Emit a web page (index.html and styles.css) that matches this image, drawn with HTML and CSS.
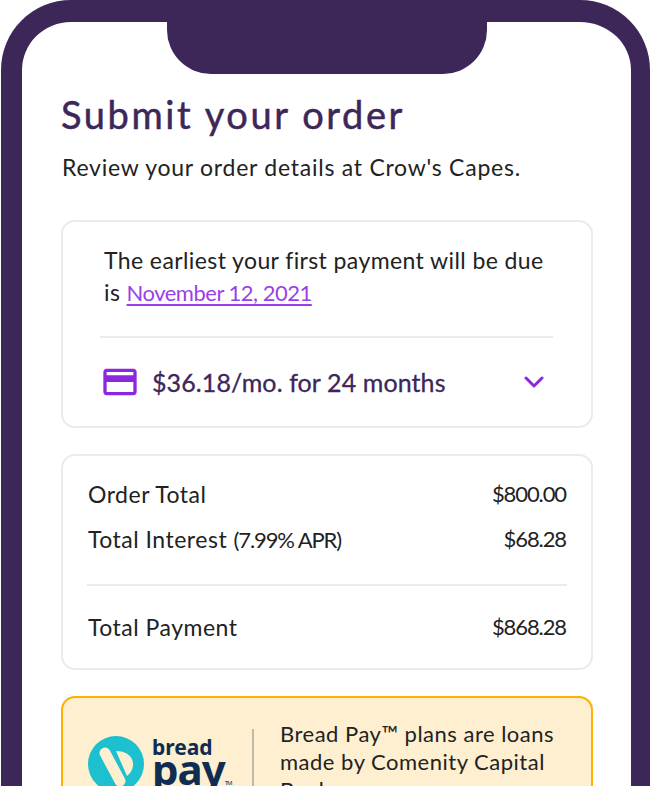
FILE: index.html
```html
<!DOCTYPE html>
<html lang="en">
<head>
    <meta charset="UTF-8">
    <meta name="viewport" content="width=device-width, initial-scale=1.0">
    <title>Submit your order</title>
    <link rel="stylesheet" href="styles.css">
</head>
<body>
    <div class="phone">
        <div class="notch"></div>
        <div class="screen">
            <h1 class="title">Submit your order</h1>
            <p class="subtitle">Review your order details at Crow's Capes.</p>

            <div class="card plan-card">
                <p class="due">The earliest your first payment will be due<br>is <a href="#" class="due-date">November 12, 2021</a></p>
                <hr class="plan-line">
                <div class="plan-row">
                    <svg class="card-icon" viewBox="0 0 24 24"><path d="M20 4H4c-1.11 0-1.99.89-1.99 2L2 18c0 1.11.89 2 2 2h16c1.11 0 2-.89 2-2V6c0-1.11-.89-2-2-2zm0 14H4v-6h16v6zm0-10H4V6h16v2z"/></svg>
                    <span class="plan-text">$36.18/mo. for 24 months</span>
                    <svg class="chevron" viewBox="0 0 20 12"><path d="M2 2l8 8 8-8"/></svg>
                </div>
            </div>

            <div class="card totals-card">
                <div class="total-row"><span>Order Total</span><span class="amount">$800.00</span></div>
                <div class="total-row"><span>Total Interest <span class="amount">(7.99% APR)</span></span><span class="amount">$68.28</span></div>
                <hr class="total-line">
                <div class="total-row"><span>Total Payment</span><span class="amount">$868.28</span></div>
            </div>

            <div class="card notice-card">
                <div class="logo">
                    <svg class="logo-mark" viewBox="0 0 56 56">
                        <circle cx="28" cy="28" r="28" fill="#1dc0cf"/>
                        <path d="M17 17l15 28" stroke="#fdefd0" stroke-width="11" stroke-linecap="round"/>
                        <path d="M28 15c9 0 16 4 17 12 .5 5-2 10-6 13z" fill="#fdefd0"/>
                    </svg>
                    <div class="logo-text">
                        <span class="logo-bread">bread</span>
                        <span class="logo-pay">pay<sup class="logo-tm">TM</sup></span>
                    </div>
                </div>
                <div class="notice-line"></div>
                <p class="notice-text">Bread Pay™ plans are loans made by Comenity Capital Bank.</p>
            </div>
        </div>
    </div>
</body>
</html>
```

FILE: styles.css
```css
html, body {
    margin: 0;
    height: 786px;
    overflow: hidden;
    background: #fff;
}
body {
    font-family: Lato, sans-serif;
    color: #222;
}
.phone {
    box-sizing: border-box;
    width: 649px;
    height: 1000px;
    margin-left: 1px;
    border: solid #3d2759;
    border-width: 22px 19px 22px 21px;
    border-radius: 70px;
    background: #fff;
}
.notch {
    width: 320px;
    height: 52px;
    margin: 0 auto;
    background: #3d2759;
    border-radius: 0 0 44px 44px;
}
.screen {
    padding: 16px 38px 0 39px;
}
.title {
    margin: 0;
    font-size: 38px;
    line-height: 48px;
    font-weight: 400;
    letter-spacing: 2.6px;
    -webkit-text-stroke: 0.5px #3d2759;
    color: #3d2759;
}
.subtitle {
    margin: 13px 0 37px 1px;
    font-size: 23px;
    line-height: 32px;
    letter-spacing: 0.75px;
}
.card {
    box-sizing: border-box;
    border: 2px solid #ebebeb;
    border-radius: 14px;
    margin-bottom: 26px;
}
.plan-card {
    height: 208px;
    padding: 22px 38px 0;
}
.due {
    margin: 0 0 0 3px;
    font-size: 23px;
    line-height: 32px;
    letter-spacing: 0.4px;
}
.due-date {
    color: #9b3fe8;
    font-size: 22px;
    letter-spacing: -0.5px;
    text-underline-offset: 3px;
}
.plan-line, .total-line {
    border: 0;
    height: 2px;
    background: #ebebeb;
}
.plan-line {
    margin: 27px 0 0 -1px;
}
.plan-row {
    display: flex;
    align-items: center;
    margin-top: 24px;
    margin-left: -1px;
}
.card-icon {
    width: 40px;
    height: 40px;
    fill: #8c27e0;
}
.plan-text {
    flex: 1;
    margin-left: 12px;
    font-size: 25px;
    letter-spacing: 0.1px;
    -webkit-text-stroke: 0.3px #3d2759;
    color: #3d2759;
}
.chevron {
    width: 20px;
    height: 12px;
    margin-right: 9px;
    fill: none;
    stroke: #8c27e0;
    stroke-width: 3;
    stroke-linecap: round;
    stroke-linejoin: round;
}
.totals-card {
    height: 216px;
    padding: 20px 25px 0;
}
.total-row {
    display: flex;
    justify-content: space-between;
    font-size: 23px;
    line-height: 36px;
    letter-spacing: 0.5px;
    margin-bottom: 9px;
}
.amount {
    font-size: 22px;
    letter-spacing: -1.1px;
}
.total-line {
    margin: 26px -1px 23px;
}
.notice-card {
    display: flex;
    align-items: flex-start;
    background: #fdefd0;
    border-color: #ffb000;
    padding: 31px 25px 0;
    height: 200px;
}
.logo {
    display: flex;
    align-items: flex-start;
    flex: none;
    width: 164px;
    margin-top: 7px;
}
.logo-mark {
    width: 56px;
    height: 56px;
    flex: none;
}
.logo-text {
    display: flex;
    flex-direction: column;
    margin-left: 8px;
    color: #0f2d52;
    font-family: "Noto Sans", sans-serif;
    font-weight: 700;
}
.logo-bread {
    font-size: 21px;
    line-height: 22px;
}
.logo-pay {
    font-size: 42px;
    line-height: 22px;
    letter-spacing: -1px;
}
.logo-tm {
    font-size: 6px;
    font-weight: 400;
    vertical-align: baseline;
}
.notice-line {
    flex: none;
    width: 2px;
    height: 100px;
    margin: 0 26px 0 0;
    background: #bdb9ae;
}
.notice-text {
    margin: -9px 0 0;
    font-size: 22px;
    line-height: 28px;
    letter-spacing: 0.5px;
}
```
